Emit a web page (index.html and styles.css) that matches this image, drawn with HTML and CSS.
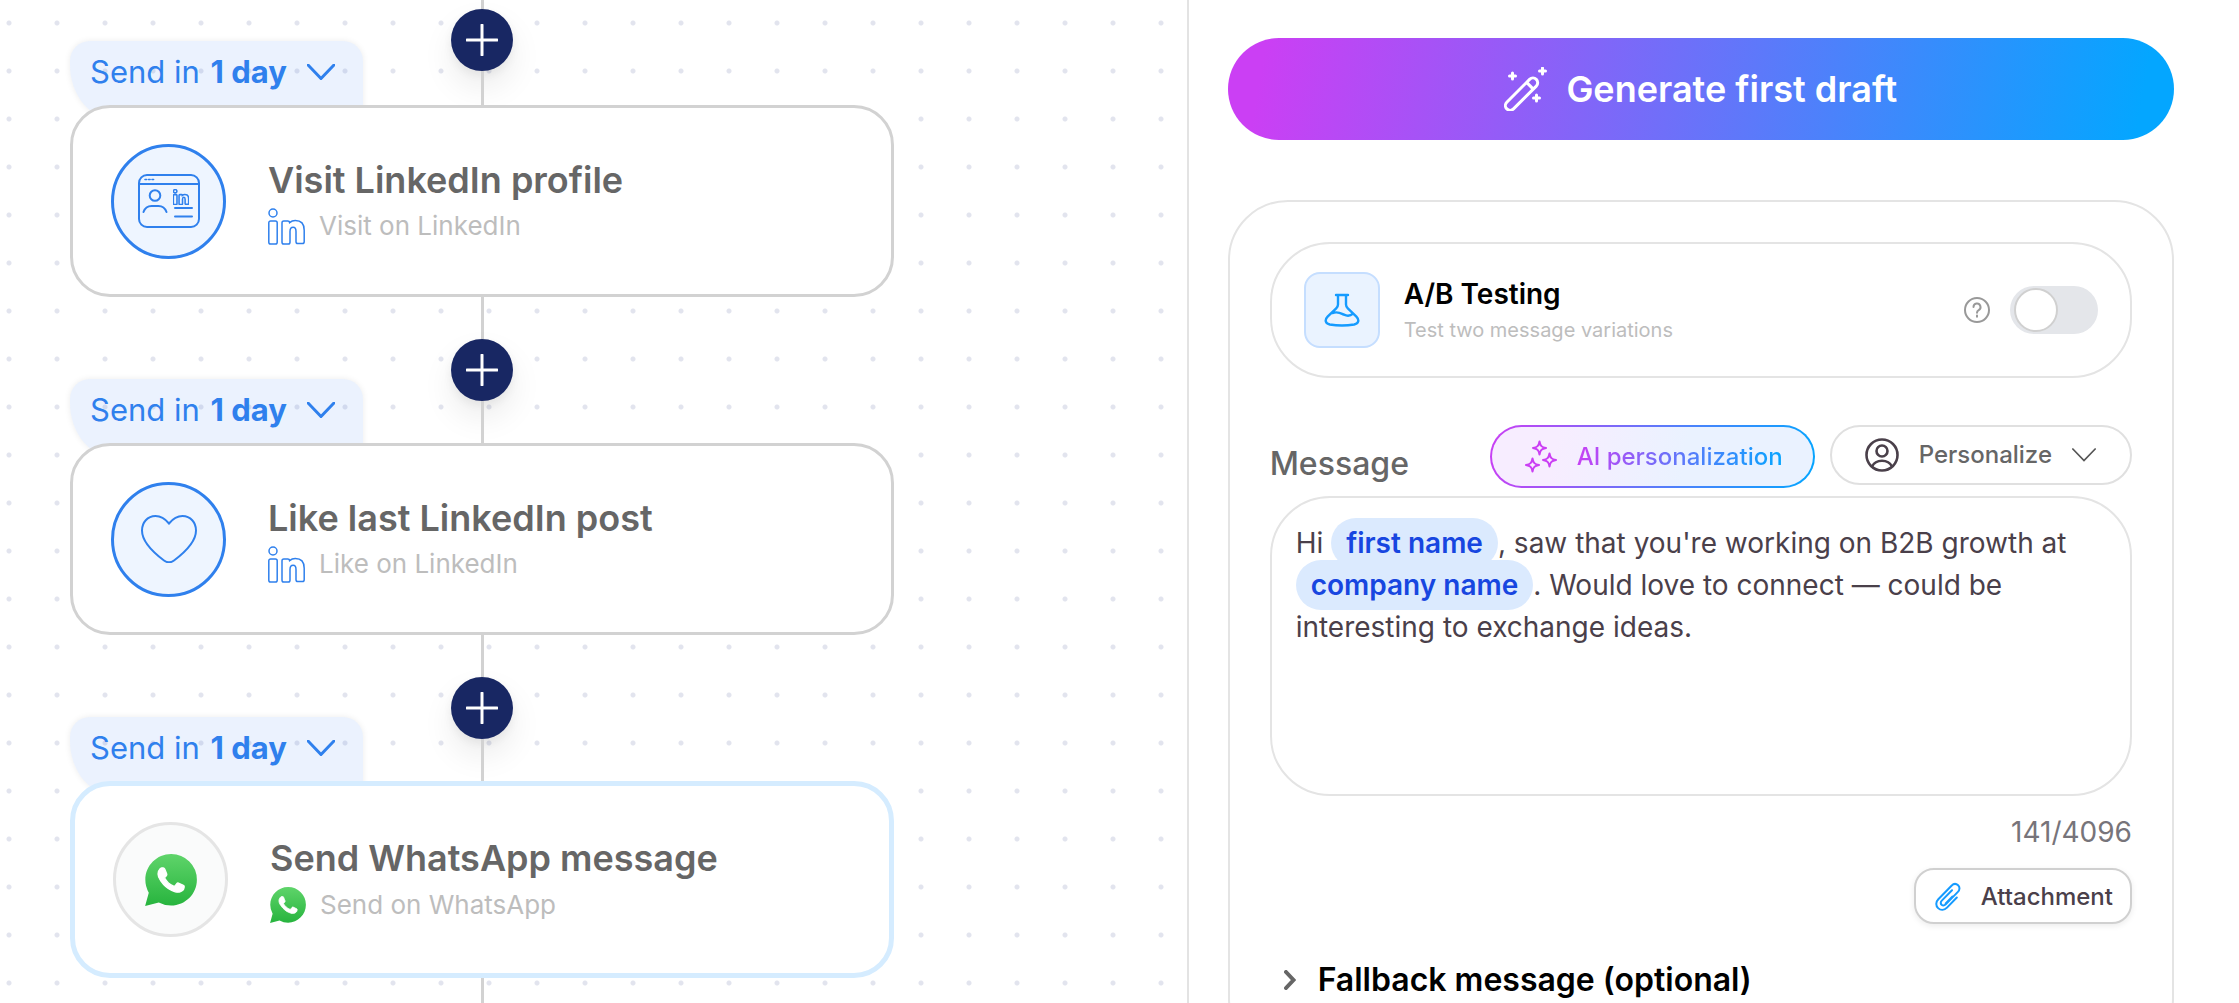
FILE: index.html
```html
<!DOCTYPE html>
<html lang="en">
<head>
<meta charset="utf-8">
<meta name="viewport" content="width=device-width, initial-scale=1">
<title>Campaign sequence</title>
<link rel="stylesheet" href="styles.css">
</head>
<body>
<svg class="sprite" aria-hidden="true">
  <defs>
    <linearGradient id="wa-green" x1="0" y1="0" x2="0" y2="1">
      <stop offset="0" stop-color="#5fd46a"/>
      <stop offset="1" stop-color="#27b43e"/>
    </linearGradient>
    <symbol id="linkedin" viewBox="0 0 37 37">
      <circle cx="5" cy="5" r="4"/>
      <path d="M2.6 13h4.8a1.8 1.8 0 0 1 1.8 1.8v19.4a1.8 1.8 0 0 1-1.8 1.8H2.6a1.8 1.8 0 0 1-1.8-1.8V14.8a1.8 1.8 0 0 1 1.8-1.8z"/>
      <path d="M15.8 13h4a1.8 1.8 0 0 1 1.8 1.6c1.7-1.5 3.5-2.1 5.7-2.1 5.6 0 8.9 3.5 8.900 9.700v11.600a1.800 1.800 0 0 1-1.800 1.800h-4.600a1.800 1.800 0 0 1-1.800-1.800V23.500c0-2.600-.9-4.200-2.900-4.200s-3.100 1.600-3.100 4.200v10.700a1.800 1.800 0 0 1-1.800 1.800h-4.400a1.800 1.800 0 0 1-1.800-1.800V14.800a1.800 1.800 0 0 1 1.800-1.800z"/>
    </symbol>
    <symbol id="whatsapp" viewBox="0 0 24 24">
      <path fill="url(#wa-green)" d="M.057 24l1.687-6.163a11.867 11.867 0 01-1.587-5.946C.16 5.335 5.495 0 12.050 0a11.817 11.817 0 018.413 3.488 11.824 11.824 0 013.480 8.414c-.003 6.557-5.338 11.892-11.893 11.892a11.900 11.900 0 01-5.688-1.448L.057 24z"/>
      <path fill="#fff" d="M17.472 14.382c-.297-.149-1.758-.867-2.030-.967-.273-.099-.471-.148-.670.150-.197.297-.767.966-.940 1.164-.173.199-.347.223-.644.075-.297-.150-1.255-.463-2.390-1.475-.883-.788-1.480-1.761-1.653-2.059-.173-.297-.018-.458.130-.606.134-.133.298-.347.446-.520.149-.174.198-.298.298-.497.099-.198.050-.371-.025-.520-.075-.149-.669-1.612-.916-2.207-.242-.579-.487-.500-.669-.510-.173-.008-.371-.010-.570-.010-.198 0-.520.074-.792.372-.272.297-1.040 1.016-1.040 2.479 0 1.462 1.065 2.875 1.213 3.074.149.198 2.096 3.200 5.077 4.487.709.306 1.262.489 1.694.625.712.227 1.360.195 1.871.118.571-.085 1.758-.719 2.006-1.413.248-.694.248-1.289.173-1.413-.074-.124-.272-.198-.570-.347" stroke="#fff" stroke-width=".6"/>
    </symbol>
    <symbol id="plus" viewBox="0 0 32 32"><path d="M16 1v30M1 16h30"/></symbol>
    <symbol id="chevron" viewBox="0 0 28 16"><path d="M1 1l13 13.500L27 1"/></symbol>
  </defs>
</svg>

<div class="app">
  <main class="canvas">
    <ol class="flow">
      <li class="step">
        <div class="link link-first">
          <div class="track"><span class="line line-top"></span><button class="add" type="button" aria-label="Add step"><svg class="plus"><use href="#plus"/></svg></button><span class="line"></span></div>
          <button class="delay" type="button"><span>Send in <b>1 day</b></span><svg class="delay-chevron"><use href="#chevron"/></svg></button>
        </div>
        <article class="card">
          <div class="badge">
            <svg class="icon-browser" viewBox="0 0 62 54" aria-hidden="true">
              <rect x="1" y="1" width="60" height="52" rx="8"/>
              <path d="M1 10h60" />
              <path d="M7 5.500h1.600M10.500 5.500h1.600M14 5.500h1.600" stroke-width="1.600"/>
              <circle cx="17" cy="21.500" r="5.300"/>
              <path d="M5.500 38c1.500-4.200 5-6 8-6h7c3 0 6.500 1.800 8 6"/>
              <path d="M37 34h17M37 42.500h17"/>
              <use href="#linkedin" x="35" y="15" width="16" height="16" stroke-width="3.600"/>
            </svg>
          </div>
          <div class="card-text">
            <h2 class="card-title">Visit LinkedIn profile</h2>
            <p class="card-sub"><svg class="icon-linkedin"><use href="#linkedin"/></svg>Visit on LinkedIn</p>
          </div>
        </article>
      </li>
      <li class="step">
        <div class="link">
          <div class="track"><span class="line"></span><button class="add" type="button" aria-label="Add step"><svg class="plus"><use href="#plus"/></svg></button><span class="line"></span></div>
          <button class="delay" type="button"><span>Send in <b>1 day</b></span><svg class="delay-chevron"><use href="#chevron"/></svg></button>
        </div>
        <article class="card">
          <div class="badge">
            <svg class="icon-heart" viewBox="0 0 56 48" aria-hidden="true">
              <path d="M28 8.500C32.500 3 37.500 1 41.500 1 49.500 1 55 7.500 55 15.500c0 12-12 22.500-22 30-3 2.200-7 2.200-10 0C13 38 1 27.500 1 15.500 1 7.500 6.500 1 14.500 1 18.500 1 23.500 3 28 8.500z"/>
            </svg>
          </div>
          <div class="card-text">
            <h2 class="card-title">Like last LinkedIn post</h2>
            <p class="card-sub"><svg class="icon-linkedin"><use href="#linkedin"/></svg>Like on LinkedIn</p>
          </div>
        </article>
      </li>
      <li class="step">
        <div class="link">
          <div class="track"><span class="line"></span><button class="add" type="button" aria-label="Add step"><svg class="plus"><use href="#plus"/></svg></button><span class="line"></span></div>
          <button class="delay" type="button"><span>Send in <b>1 day</b></span><svg class="delay-chevron"><use href="#chevron"/></svg></button>
        </div>
        <article class="card card-active">
          <div class="badge badge-plain">
            <svg class="icon-wa-large"><use href="#whatsapp"/></svg>
          </div>
          <div class="card-text">
            <h2 class="card-title">Send WhatsApp message</h2>
            <p class="card-sub"><svg class="icon-wa"><use href="#whatsapp"/></svg>Send on WhatsApp</p>
          </div>
        </article>
      </li>
    </ol>
    <span class="line line-tail"></span>
  </main>

  <aside class="panel">
    <button class="generate" type="button">
      <svg class="icon-wand" viewBox="0 0 44 44" aria-hidden="true">
        <g fill="none" stroke="#fff" stroke-width="3" stroke-linejoin="round">
          <path d="M2.800 35.200L25.600 12.400a4.700 4.700 0 0 1 6.700 6.700L9.500 41.900a4.700 4.700 0 0 1-6.700-6.700zM22.600 15.400l6.700 6.700"/>
        </g>
        <path d="M8.500 6v6M5.500 9h6M38.500 1v6M35.500 4h6M32.500 28v6M29.500 31h6" stroke="#fff" stroke-width="3" stroke-linecap="round"/>
      </svg>
      Generate first draft
    </button>

    <section class="editor">
      <div class="ab">
        <span class="ab-icon">
          <svg viewBox="0 0 36 34" class="icon-flask" aria-hidden="true">
            <path d="M12 2h12M14 2v9.500c0 1.500-.6 2.600-1.800 3.800L3.600 23.600C.4 27 1.400 30.600 5.800 31.500c7.500 1.300 16.900 1.300 24.400 0 4.400-.9 5.400-4.500 2.200-7.900l-8.600-8.300C22.600 14.100 22 13 22 11.500V2M8.500 20c5.500-2 8.500.3 11.500 1.700 3 1.400 6 1.600 9-1"/>
          </svg>
        </span>
        <label class="ab-text" for="ab-toggle"><span class="ab-title">A/B Testing</span><span class="ab-sub">Test two message variations</span></label>
        <svg class="icon-help" viewBox="0 0 26 26" aria-hidden="true">
          <circle cx="13" cy="13" r="12"/>
          <path d="M9.500 10a3.500 3.500 0 1 1 5.200 3.100c-1.200.7-1.700 1.300-1.700 2.700M13 18.600v1.200"/>
        </svg>
        <input class="toggle" id="ab-toggle" type="checkbox">
      </div>

      <div class="message-head">
        <h3 class="message-label" id="message-label">Message</h3>
        <button class="pill-button ai" type="button">
          <svg class="icon-sparkles" viewBox="0 0 32 34" aria-hidden="true">
            <path d="M14.500 1.500c.8 4.400 2.100 5.700 6.500 6.500-4.400.8-5.700 2.100-6.500 6.500-.8-4.400-2.100-5.700-6.500-6.500 4.400-.8 5.700-2.100 6.500-6.500zM24.500 13.500c.8 4.400 2.100 5.700 6.500 6.500-4.400.8-5.700 2.100-6.500 6.500-.8-4.400-2.100-5.700-6.500-6.500 4.400-.8 5.700-2.100 6.500-6.500zM7.500 18.500c.8 4.400 2.100 5.700 6.500 6.500-4.400.8-5.700 2.100-6.500 6.500-.8-4.400-2.100-5.700-6.500-6.500 4.400-.8 5.700-2.100 6.500-6.500z"/>
          </svg>
          <span class="ai-text">AI personalization</span>
        </button>
        <button class="pill-button personalize" type="button">
          <svg class="icon-person" viewBox="0 0 34 34" aria-hidden="true">
            <circle cx="17" cy="17" r="15.500"/><circle cx="17" cy="13" r="5.500"/>
            <path d="M7 28.500c2-4 5.500-5.800 10-5.800s8 1.800 10 5.800"/>
          </svg>
          <span>Personalize</span>
          <svg class="personalize-chevron"><use href="#chevron"/></svg>
        </button>
      </div>

      <div class="message" role="textbox" aria-multiline="true" aria-labelledby="message-label" contenteditable="true" spellcheck="false">Hi <span class="token">first name</span>, saw that you're working on B2B growth at <span class="token">company name</span>. Would love to connect — could be interesting to exchange ideas.</div>

      <p class="counter">141/4096</p>
      <button class="attach" type="button">
        <svg class="icon-clip" viewBox="0 0 26 29" aria-hidden="true">
          <path d="M21.800 15.500L12 25.600c-2.700 2.700-6.400 2.900-8.900.5s-2.400-6.200.2-8.900L16.500 3.700c2-2 4.700-2.200 6.600-.4s1.800 4.600-.2 6.600L10.700 22.400c-1.300 1.300-2.900 1.400-4.100.3s-1.100-2.800.2-4.100L17 8.200M17.500 14.500l-6.800 7"/>
        </svg>
        Attachment
      </button>

      <details class="fallback">
        <summary class="fallback-head"><svg class="icon-caret" viewBox="0 0 12 20" aria-hidden="true"><path d="M2 2l7.500 8L2 18"/></svg>Fallback message (optional)</summary>
      </details>
    </section>
  </aside>
</div>
</body>
</html>
```
FILE: styles.css
```css
* { box-sizing: border-box; }

body {
  margin: 0;
  background: #fff;
  color: #000;
  font-family: Inter, "Liberation Sans", sans-serif;
}

button {
  padding: 0;
  border: 0;
  background: none;
  color: inherit;
  font: inherit;
  cursor: pointer;
}

h2, h3, p, ol { margin: 0; padding: 0; }
ol { list-style: none; }
svg { display: block; flex: none; }

.sprite { position: absolute; width: 0; height: 0; }

.app {
  display: grid;
  grid-template-columns: minmax(0, 53fr) minmax(0, 47fr);
  height: 100vh;
  overflow: hidden;
}

/* Sequence canvas */
.canvas {
  display: flex;
  flex-direction: column;
  padding: 0 70px;
  overflow: hidden;
  background: radial-gradient(circle at center, #e2e4ee 2px, transparent 3px) -15px -1px / 48px 48px;
}

.flow { width: 100%; max-width: 824px; flex: none; }

.link { display: grid; height: 146px; }
.link-first { height: 105px; }

.track {
  grid-area: 1 / 1;
  display: flex;
  flex-direction: column;
  align-items: center;
}

.line { flex: 1; width: 3px; background: #d2d2d2; }
.line-top { flex: none; height: 9px; }
.line-tail { width: 3px; margin-left: 411px; }

.add {
  display: grid;
  place-items: center;
  flex: none;
  width: 62px;
  height: 62px;
  border-radius: 50%;
  background: #182763;
  box-shadow: 0 16px 32px rgba(0, 0, 0, 0.08), 0 4px 10px rgba(0, 0, 0, 0.06);
}
.plus { width: 32px; height: 32px; fill: none; stroke: #fff; stroke-width: 3; stroke-linecap: round; }

.delay {
  grid-area: 1 / 1;
  align-self: end;
  justify-self: start;
  display: flex;
  justify-content: space-between;
  align-items: center;
  width: 293px;
  height: 80px;
  margin-bottom: -16px;
  padding: 0 28px 18px 20px;
  border-radius: 20px 20px 0 48px / 20px 20px 0 56px;
  background: rgba(59, 130, 246, 0.1);
  box-shadow: 0 0 6px rgba(0, 0, 0, 0.08);
  color: #2f80ed;
  font-size: 31px;
  line-height: 36px;
}
.delay b { margin-left: 2px; }
.delay-chevron { width: 28px; height: 16px; fill: none; stroke: currentColor; stroke-width: 3; stroke-linecap: round; }

.card {
  position: relative;
  display: flex;
  align-items: center;
  gap: 42px;
  height: 192px;
  padding: 0 38px;
  border: 3px solid #d2d2d2;
  border-radius: 40px;
  background: #fff;
}
.card-active { height: 197px; border: 5px solid #d5ecff; }

.badge {
  display: grid;
  place-items: center;
  width: 115px;
  height: 115px;
  border: 3px solid #2f80ed;
  border-radius: 50%;
  background: #eef5ff;
  flex: none;
}
.badge-plain { border-color: #e5e5e5; background: #fafbfb; }

.icon-browser { width: 62px; height: 54px; fill: none; stroke: #2f80ed; stroke-width: 2; stroke-linecap: round; }
.icon-heart { width: 56px; height: 48px; fill: none; stroke: #2f80ed; stroke-width: 2; }
.icon-wa-large { width: 52px; height: 52px; }
.icon-wa { width: 36px; height: 36px; }
.icon-linkedin { width: 37px; height: 37px; fill: none; stroke: #2f80ed; stroke-width: 1.5; }

.card-title { color: #666; font-size: 36px; font-weight: 600; line-height: 44px; }
.card-sub {
  display: flex;
  align-items: center;
  gap: 14px;
  height: 37px;
  margin-top: 6px;
  color: #bdbdbd;
  font-size: 26px;
  line-height: 32px;
}

/* Message panel */
.panel {
  padding: 38px 65px 40px 39px;
  border-left: 2px solid #e3e3e3;
  overflow: hidden;
}

.generate {
  display: flex;
  justify-content: center;
  align-items: center;
  gap: 18px;
  width: 100%;
  height: 102px;
  border-radius: 51px;
  background: linear-gradient(100deg, #cb3ff4 4%, #4b82fb 64%, #04a6ff 96%);
  color: #fff;
  font-size: 36px;
  font-weight: 600;
  line-height: 44px;
}
.icon-wand { width: 44px; height: 44px; }

.editor {
  display: flex;
  flex-direction: column;
  margin-top: 60px;
  padding: 40px 40px 56px;
  border: 2px solid #e4e4e4;
  border-radius: 60px;
}

.ab {
  display: flex;
  align-items: center;
  height: 136px;
  padding: 0 32px;
  border: 2px solid #e4e4e4;
  border-radius: 60px;
}
.ab-icon {
  display: grid;
  place-items: center;
  width: 76px;
  height: 76px;
  border: 2px solid #c5deff;
  border-radius: 16px;
  background: #eaf3ff;
}
.icon-flask { width: 36px; height: 34px; fill: none; stroke: #159bff; stroke-width: 2.4; stroke-linecap: round; }
.ab-text { display: flex; flex-direction: column; flex: 1; margin-left: 24px; }
.ab-title { font-size: 28px; font-weight: 600; line-height: 40px; }
.ab-sub { color: #bdbdbd; font-size: 20px; line-height: 32px; }
.icon-help { width: 26px; height: 26px; fill: none; stroke: #999; stroke-width: 2; stroke-linecap: round; }

.toggle {
  appearance: none;
  display: flex;
  align-items: center;
  width: 88px;
  height: 48px;
  margin: 0 0 0 20px;
  padding: 4px;
  border-radius: 24px;
  background: #e4e6ea;
}
.toggle::before {
  content: "";
  width: 40px;
  height: 40px;
  border: 2px solid #d0d0d0;
  border-radius: 50%;
  background: #fff;
}
.toggle:checked { justify-content: flex-end; background: #159bff; }

.message-head {
  display: flex;
  align-items: flex-start;
  gap: 15px;
  margin: 47px 0 8px;
}
.message-label { flex: 1; padding-top: 19px; color: #666; font-size: 32px; font-weight: 500; line-height: 40px; }

.pill-button {
  display: flex;
  align-items: center;
  border: 2px solid #e0e0e0;
  border-radius: 32px;
  font-size: 24px;
  font-weight: 500;
  line-height: 32px;
}
.ai {
  gap: 20px;
  height: 63px;
  padding: 0 30px 0 33px;
  border-color: transparent;
  background:
    linear-gradient(100deg, #f7edff 20%, #eaf2ff 60%) padding-box,
    linear-gradient(100deg, #cb3ff4, #4b82fb 60%, #04a6ff) border-box;
}
.ai-text {
  background: linear-gradient(100deg, #cb3ff4, #4b82fb 60%, #04a6ff);
  background-clip: text;
  color: transparent;
}
.icon-sparkles { width: 32px; height: 34px; fill: none; stroke: #cb3ff4; stroke-width: 2; stroke-linejoin: round; }

.personalize { gap: 20px; height: 60px; padding: 0 34px 0 33px; color: #666; }
.icon-person { width: 34px; height: 34px; fill: none; stroke: #4a404a; stroke-width: 2.6; }
.personalize-chevron { width: 24px; height: 14px; fill: none; stroke: #555; stroke-width: 2; stroke-linecap: round; }

.message {
  min-height: 300px;
  padding: 24px;
  border: 2px solid #e4e4e4;
  border-radius: 60px;
  outline: 0;
  color: #4a404a;
  font-size: 28px;
  line-height: 42px;
}
.token {
  padding: 8px 15px;
  border-radius: 25px;
  background: #dbeafe;
  color: #1746e0;
  font-weight: 600;
}

.counter { margin-top: 16px; color: #77747a; font-size: 28px; line-height: 40px; text-align: right; }

.attach {
  display: flex;
  align-items: center;
  align-self: flex-end;
  gap: 20px;
  height: 56px;
  margin-top: 16px;
  padding: 0 17px 0 19px;
  border: 2px solid #d0d0d0;
  border-radius: 20px;
  background: #fff;
  box-shadow: 0 2px 6px rgba(0, 0, 0, 0.08);
  color: #4a404a;
  font-size: 24px;
  font-weight: 500;
}
.icon-clip { width: 26px; height: 29px; fill: none; stroke: #159bff; stroke-width: 2; stroke-linecap: round; }

.fallback { margin-top: 36px; }
.fallback-head {
  display: flex;
  align-items: center;
  gap: 22px;
  padding-left: 14px;
  list-style: none;
  font-size: 32px;
  font-weight: 600;
  line-height: 40px;
  cursor: pointer;
}
.icon-caret { width: 12px; height: 20px; fill: none; stroke: #666; stroke-width: 4; stroke-linecap: round; }
```
